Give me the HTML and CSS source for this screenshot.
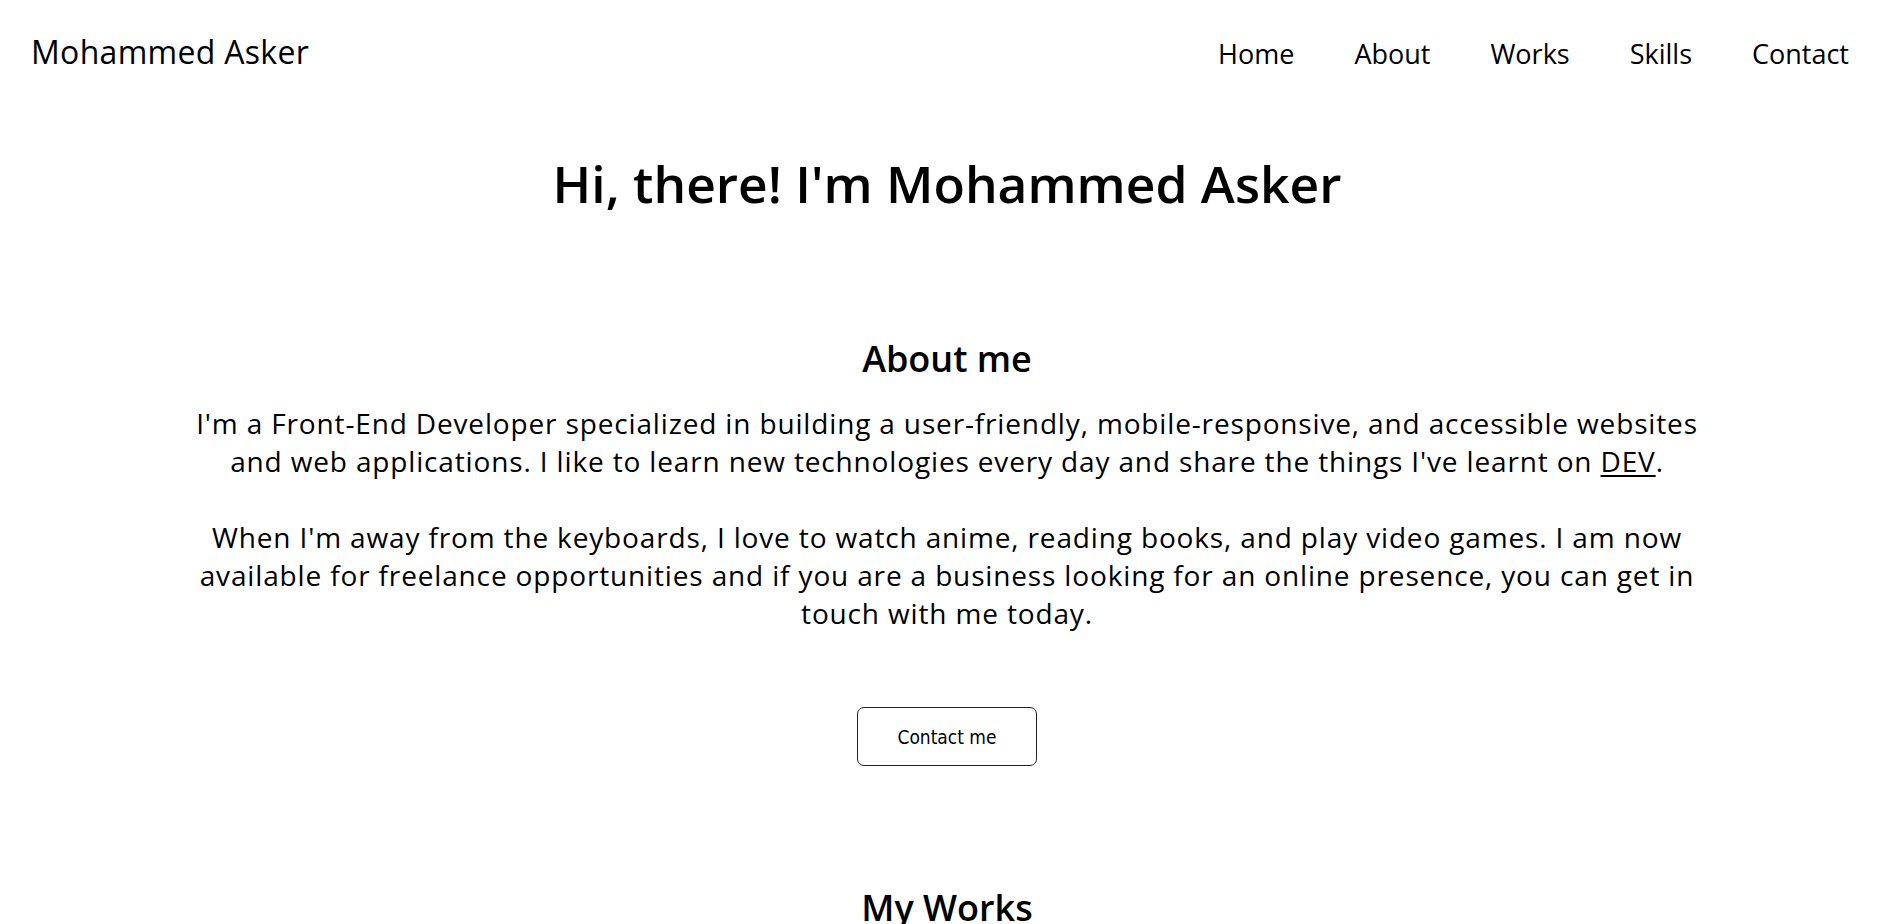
FILE: index.html
```html
<!DOCTYPE html>
<html lang="en">
<head>
<meta charset="utf-8">
<title>Mohammed Asker</title>
<link rel="stylesheet" href="styles.css">
</head>
<body>
<header class="site-header">
  <a class="logo" href="#">Mohammed Asker</a>
  <nav class="nav">
    <a href="#home">Home</a>
    <a href="#about">About</a>
    <a href="#works">Works</a>
    <a href="#skills">Skills</a>
    <a href="#contact">Contact</a>
  </nav>
</header>
<main class="main">
  <h1 class="hero-title">Hi, there! I'm Mohammed Asker</h1>
  <section class="about" id="about">
    <h2 class="section-title">About me</h2>
    <p class="about-text">I'm a Front-End Developer specialized in building a user-friendly, mobile-responsive, and accessible websites and web applications. I like to learn new technologies every day and share the things I've learnt on <a href="#">DEV</a>.</p>
    <p class="about-text">When I'm away from the keyboards, I love to watch anime, reading books, and play video games. I am now available for freelance opportunities and if you are a business looking for an online presence, you can get in touch with me today.</p>
    <button class="contact-btn" type="button">Contact me</button>
  </section>
  <section class="works" id="works">
    <h2 class="section-title">My Works</h2>
  </section>
</main>
</body>
</html>
```

FILE: styles.css
```css
* { box-sizing: border-box; }

html, body {
  margin: 0;
  padding: 0;
  background: #fff;
  color: #000;
  font-family: "Open Sans", "Noto Sans", sans-serif;
}

a { color: inherit; text-decoration: none; }

.site-header {
  display: flex;
  justify-content: space-between;
  align-items: baseline;
  padding: 32px 45px 0 31px;
}

.logo {
  font-size: 32px;
  letter-spacing: 0.3px;
  line-height: 40px;
  font-weight: 400;
}

.nav {
  display: flex;
  gap: 60px;
}

.nav a {
  font-size: 27px;
  line-height: 40px;
}

.main {
  display: flex;
  flex-direction: column;
  align-items: center;
  text-align: center;
}

.hero-title {
  margin: 78px 0 0;
  font-size: 51.5px;
  line-height: 62px;
  font-weight: 600;
}

.about {
  width: 80%;
  display: flex;
  flex-direction: column;
  align-items: center;
}

.section-title {
  margin: 123px 0 0;
  font-size: 36px;
  line-height: 44px;
  font-weight: 600;
}

.about-text {
  margin: 23px 0 0;
  font-size: 28px;
  letter-spacing: 0.85px;
  line-height: 38px;
}

.about-text + .about-text {
  margin-top: 38px;
}

.about-text a {
  text-decoration: underline;
  text-underline-offset: 3px;
}

.contact-btn {
  margin-top: 75px;
  width: 180px;
  height: 59px;
  background: #fff;
  color: #000;
  border: 1px solid #222;
  border-radius: 7px;
  font-family: "DejaVu Sans Condensed", "DejaVu Sans", sans-serif;
  font-size: 19px;
  padding-top: 2px;
  cursor: pointer;
}

.works .section-title {
  margin-top: 120px;
}
```
